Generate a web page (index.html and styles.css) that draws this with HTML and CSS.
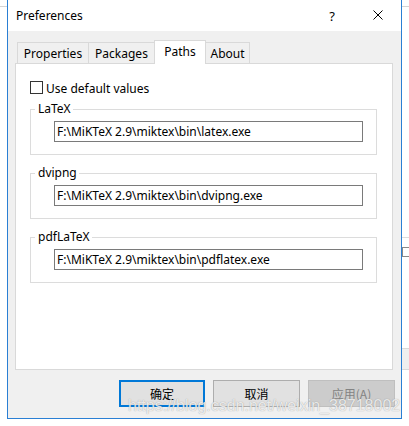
FILE: index.html
```html
<!DOCTYPE html>
<html lang="en">
<head>
<meta charset="utf-8">
<title>Preferences</title>
<link rel="stylesheet" href="styles.css">
</head>
<body>
<div class="window">
  <div class="titlebar">
    <span class="title">Preferences</span>
    <span class="caption-btn help">?</span>
    <span class="caption-btn close">
      <svg width="10" height="10" viewBox="0 0 10 10"><path d="M0.5 0.5 L9.5 9.5 M9.5 0.5 L0.5 9.5" stroke="#000" stroke-width="1" fill="none"/></svg>
    </span>
  </div>
  <div class="body">
    <div class="tabs">
      <div class="tab tab-properties">Properties</div>
      <div class="tab tab-packages">Packages</div>
      <div class="tab tab-paths active">Paths</div>
      <div class="tab tab-about">About</div>
    </div>
    <div class="panel">
      <label class="check"><span class="box"></span><span>Use default values</span></label>
      <fieldset class="group">
        <legend>LaTeX</legend>
        <div class="input">F:\MiKTeX 2.9\miktex\bin\latex.exe</div>
      </fieldset>
      <fieldset class="group">
        <legend>dvipng</legend>
        <div class="input">F:\MiKTeX 2.9\miktex\bin\dvipng.exe</div>
      </fieldset>
      <fieldset class="group">
        <legend>pdfLaTeX</legend>
        <div class="input">F:\MiKTeX 2.9\miktex\bin\pdflatex.exe</div>
      </fieldset>
    </div>
    <div class="buttons">
      <button class="btn default">确定</button>
      <button class="btn">取消</button>
      <button class="btn disabled">应用(A)</button>
    </div>
  </div>
</div>
<div class="watermark">https://blog.csdn.net/weixin_38718002</div>
</body>
</html>
```

FILE: styles.css
```css
html, body {
  margin: 0;
  padding: 0;
}
body {
  width: 409px;
  height: 426px;
  overflow: hidden;
  position: relative;
  font-family: "Noto Sans", "Noto Sans CJK SC", sans-serif;
  font-size: 12px;
  color: #000;
  background:
    linear-gradient(#d4d4d4, #d4d4d4) 0 6px / 100% 1px no-repeat,
    linear-gradient(#dcdcdc, #dcdcdc) 402px 237px / 7px 1px no-repeat,
    linear-gradient(#888, #888) 402px 247px / 7px 1px no-repeat,
    linear-gradient(#888, #888) 402px 256px / 7px 1px no-repeat,
    linear-gradient(#888, #888) 402px 247px / 1px 10px no-repeat,
    linear-gradient(#d9d9d9, #d9d9d9) 402px 348px / 7px 1px no-repeat,
    linear-gradient(#d9d9d9, #d9d9d9) 402px 369px / 7px 1px no-repeat,
    linear-gradient(#efefef, #efefef) 402px 349px / 7px 20px no-repeat,
    #fff;
}
.window {
  margin-left: 7px;
  width: 393px;
  height: 418px;
  border: 1px solid #2a7fd4;
  border-top: none;
  display: flex;
  flex-direction: column;
  background: #f0f0f0;
}
.titlebar {
  height: 31px;
  flex: none;
  background: #fff;
  display: flex;
  align-items: center;
  padding-left: 8px;
}
.title {
  flex: 1;
  line-height: 16px;
}
.caption-btn {
  width: 46px;
  height: 31px;
  display: flex;
  align-items: center;
  justify-content: center;
}
.help {
  font-size: 13px;
}
.close svg {
  display: block;
  margin-top: -1px;
}
.body {
  flex: 1;
  display: flex;
  flex-direction: column;
  padding: 9px 8px 11px 7px;
}
.tabs {
  height: 23px;
  display: flex;
  align-items: flex-end;
  padding-left: 2px;
}
.tab {
  height: 21px;
  box-sizing: border-box;
  border: 1px solid #d9d9d9;
  border-bottom: none;
  background: #f0f0f0;
  margin-left: -1px;
  display: flex;
  align-items: center;
  justify-content: center;
  padding-top: 1px;
}
.tab-properties { width: 72px; margin-left: 0; }
.tab-packages { width: 67px; }
.tab-paths { width: 52px; }
.tab-about { width: 45px; }
.tab.active {
  height: 24px;
  margin-bottom: -1px;
  background: #fff;
  position: relative;
  z-index: 1;
  padding-top: 0;
  padding-bottom: 3px;
}
.panel {
  flex: 1;
  background: #fff;
  border: 1px solid #d9d9d9;
  display: flex;
  flex-direction: column;
  padding: 0 15px 0 14px;
}
.check {
  margin-top: 17px;
  display: flex;
  align-items: center;
  height: 13px;
  gap: 3px;
}
.box {
  width: 13px;
  height: 13px;
  box-sizing: border-box;
  border: 1px solid #333;
  background: #fff;
}
.check span:last-child {
  line-height: 13px;
  margin-top: 1px;
}
.group {
  margin: 8px 0 0 0;
  padding: 0 0 12px 0;
  border: 1px solid #dcdcdc;
  min-width: 0;
}
.group + .group {
  margin-top: 11px;
}
.group legend {
  margin-left: 4px;
  padding: 0 2px 0 3px;
  line-height: 14px;
  height: 14px;
}
.input {
  margin: 5px 13px 0 23px;
  height: 21px;
  box-sizing: border-box;
  border: 1px solid #7a7a7a;
  padding-left: 2px;
  line-height: 19px;
  white-space: nowrap;
  overflow: hidden;
}
.buttons {
  margin-top: 10px;
  height: 27px;
  display: flex;
  justify-content: flex-end;
  gap: 8px;
  margin-right: -2px;
}
.btn {
  width: 87px;
  height: 27px;
  box-sizing: border-box;
  border: 1px solid #adadad;
  background: #e1e1e1;
  font-family: "Noto Sans CJK SC", sans-serif;
  font-size: 12px;
  color: #000;
  padding: 0;
  margin: 0;
}
.btn.default {
  border: 2px solid #0078d7;
  width: 86px;
}
.btn.disabled {
  background: #cccccc;
  border-color: #bfbfbf;
  color: #838383;
}
.watermark {
  position: absolute;
  left: 128px;
  top: 397px;
  font-family: "Liberation Sans", Arial, sans-serif;
  font-size: 16px;
  line-height: 18px;
  color: rgba(255, 255, 255, 0.8);
  text-shadow: 0 0 1px rgba(110, 110, 110, 0.7);
  white-space: nowrap;
  pointer-events: none;
}
```
